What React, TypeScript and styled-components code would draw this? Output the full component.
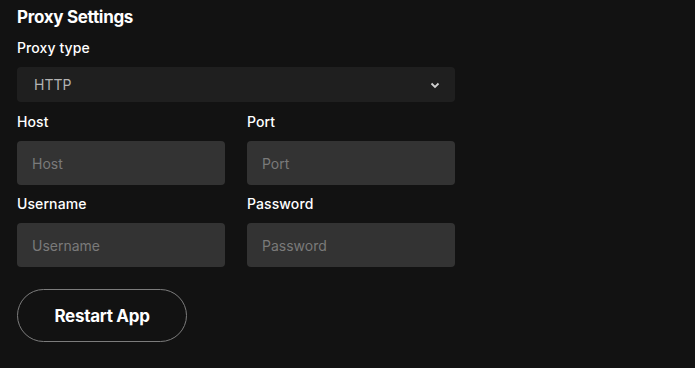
import React from 'react'
import styled, { createGlobalStyle } from 'styled-components'

const GlobalStyle = createGlobalStyle`
    html, body {
        margin: 0;
        background: #121212;
        font-family: Inter, 'Noto Sans', sans-serif;
        color: #fff;
    }
`

const Page = styled.div`
    display: flex;
    flex-direction: column;
    gap: 9px;
    padding: 5px 17px 20px;
    width: 438px;
`

const Title = styled.h2`
    margin: 0;
    font-size: 17px;
    line-height: 24px;
    font-weight: 700;
    letter-spacing: -0.3px;
`

const Field = styled.div`
    display: flex;
    flex-direction: column;
    gap: 9px;
    min-width: 0;
`

const Label = styled.label`
    font-size: 14px;
    line-height: 20px;
    font-weight: 500;
    letter-spacing: 0.1px;
    color: #fff;
`

const SelectBox = styled.div`
    height: 35px;
    border-radius: 4px;
    background: #1f1f1f;
    display: flex;
    align-items: center;
    padding: 0 17px;
    font-size: 14px;
    color: #b3b3b3;
    margin-bottom: 1px;
`

const Chevron = styled.svg`
    margin-left: auto;
    margin-right: -3px;
`

const Row = styled.div`
    display: grid;
    grid-template-columns: 1fr 1fr;
    column-gap: 22px;
`

const Input = styled.input`
    width: 100%;
    min-width: 0;
    height: 44px;
    box-sizing: border-box;
    border: none;
    outline: none;
    border-radius: 4px;
    background: #333333;
    padding: 0 15px;
    font-family: inherit;
    font-size: 14px;
    color: #fff;

    &::placeholder {
        color: #7a7a7a;
    }
`

const RestartButton = styled.button`
    align-self: flex-start;
    margin-top: 13px;
    width: 170px;
    height: 53px;
    border-radius: 27px;
    border: 1px solid #7c7c7c;
    background: transparent;
    color: #fff;
    font-family: inherit;
    font-size: 17px;
    font-weight: 700;
    letter-spacing: -0.3px;
    cursor: pointer;
`

export default function App() {
    return (
        <Page>
            <GlobalStyle />
            <Title>Proxy Settings</Title>
            <Field>
                <Label>Proxy type</Label>
                <SelectBox>
                    HTTP
                    <Chevron width="12" height="12" viewBox="0 0 12 12">
                        <path d="M2.5 4.5 6 8l3.5-3.5" fill="none" stroke="#d0d0d0" strokeWidth="1.8" />
                    </Chevron>
                </SelectBox>
            </Field>
            <Row>
                <Field>
                    <Label>Host</Label>
                    <Input placeholder="Host" />
                </Field>
                <Field>
                    <Label>Port</Label>
                    <Input placeholder="Port" />
                </Field>
            </Row>
            <Row>
                <Field>
                    <Label>Username</Label>
                    <Input placeholder="Username" />
                </Field>
                <Field>
                    <Label>Password</Label>
                    <Input placeholder="Password" type="password" />
                </Field>
            </Row>
            <RestartButton>Restart App</RestartButton>
        </Page>
    )
}
